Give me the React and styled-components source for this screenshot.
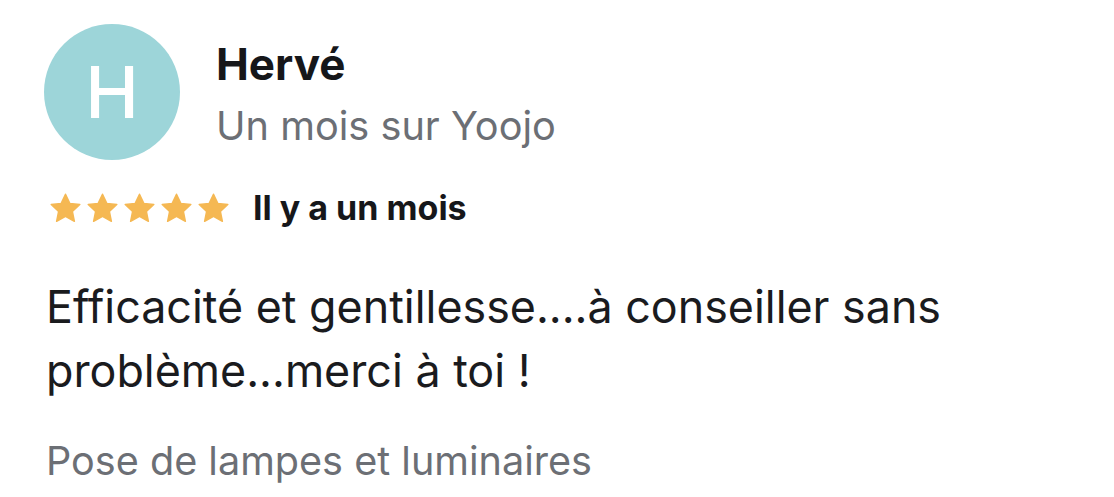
import React from "react";
import styled, { createGlobalStyle } from "styled-components";

const Global = createGlobalStyle`
  html, body { margin: 0; padding: 0; background: #ffffff; }
  body { font-family: Inter, "Noto Sans", "Liberation Sans", sans-serif; -webkit-font-smoothing: antialiased; }
`;

const Card = styled.article`
  display: flex;
  flex-direction: column;
  padding: 24px 0 0 44px;
  width: 1030px;
`;

const Header = styled.header`
  display: flex;
  align-items: flex-start;
  gap: 36px;
`;

const Avatar = styled.div`
  width: 136px;
  height: 136px;
  border-radius: 50%;
  background: #9dd5d9;
  color: #ffffff;
  display: flex;
  align-items: center;
  justify-content: center;
  font-size: 72px;
  font-weight: 500;
  line-height: 1;
  flex-shrink: 0;
`;

const Identity = styled.div`
  display: flex;
  flex-direction: column;
  gap: 6px;
  margin-top: 12px;
`;

const Name = styled.div`
  font-size: 44px;
  line-height: 56px;
  font-weight: 700;
  color: #16171a;
`;

const Seniority = styled.div`
  font-size: 39.7px;
  line-height: 56px;
  font-weight: 400;
  color: #6c6f75;
`;

const RatingRow = styled.div`
  display: flex;
  align-items: center;
  gap: 22px;
  margin-top: 30px;
  height: 36px;
  padding-left: 4px;
`;

const Stars = styled.div`
  display: flex;
  gap: 2px;
`;

const When = styled.span`
  font-size: 34px;
  line-height: 36px;
  font-weight: 700;
  color: #16171a;
`;

const Comment = styled.p`
  margin: 49px 0 0 2px;
  font-size: 44.8px;
  line-height: 64px;
  color: #1a1b1e;
`;

const Service = styled.p`
  margin: 34px 0 0 2px;
  font-size: 39.6px;
  line-height: 48px;
  color: #6c6f75;
`;

const Star = () => (
  <svg width="35" height="35" viewBox="0 0 24 24">
    <path
      d="M12 2.2l2.95 6.3 6.85.8-5.08 4.7 1.38 6.8L12 17.4l-6.1 3.4 1.38-6.8L2.2 9.3l6.85-.8z"
      fill="#f5b853"
      stroke="#f5b853"
      strokeWidth="1"
      strokeLinejoin="round"
    />
  </svg>
);

export default function App() {
  return (
    <>
      <Global />
      <Card>
        <Header>
          <Avatar>H</Avatar>
          <Identity>
            <Name>Hervé</Name>
            <Seniority>Un mois sur Yoojo</Seniority>
          </Identity>
        </Header>
        <RatingRow>
          <Stars>
            {[0, 1, 2, 3, 4].map((i) => (
              <Star key={i} />
            ))}
          </Stars>
          <When>Il y a un mois</When>
        </RatingRow>
        <Comment>Efficacité et gentillesse....à conseiller sans problème...merci à toi !</Comment>
        <Service>Pose de lampes et luminaires</Service>
      </Card>
    </>
  );
}
